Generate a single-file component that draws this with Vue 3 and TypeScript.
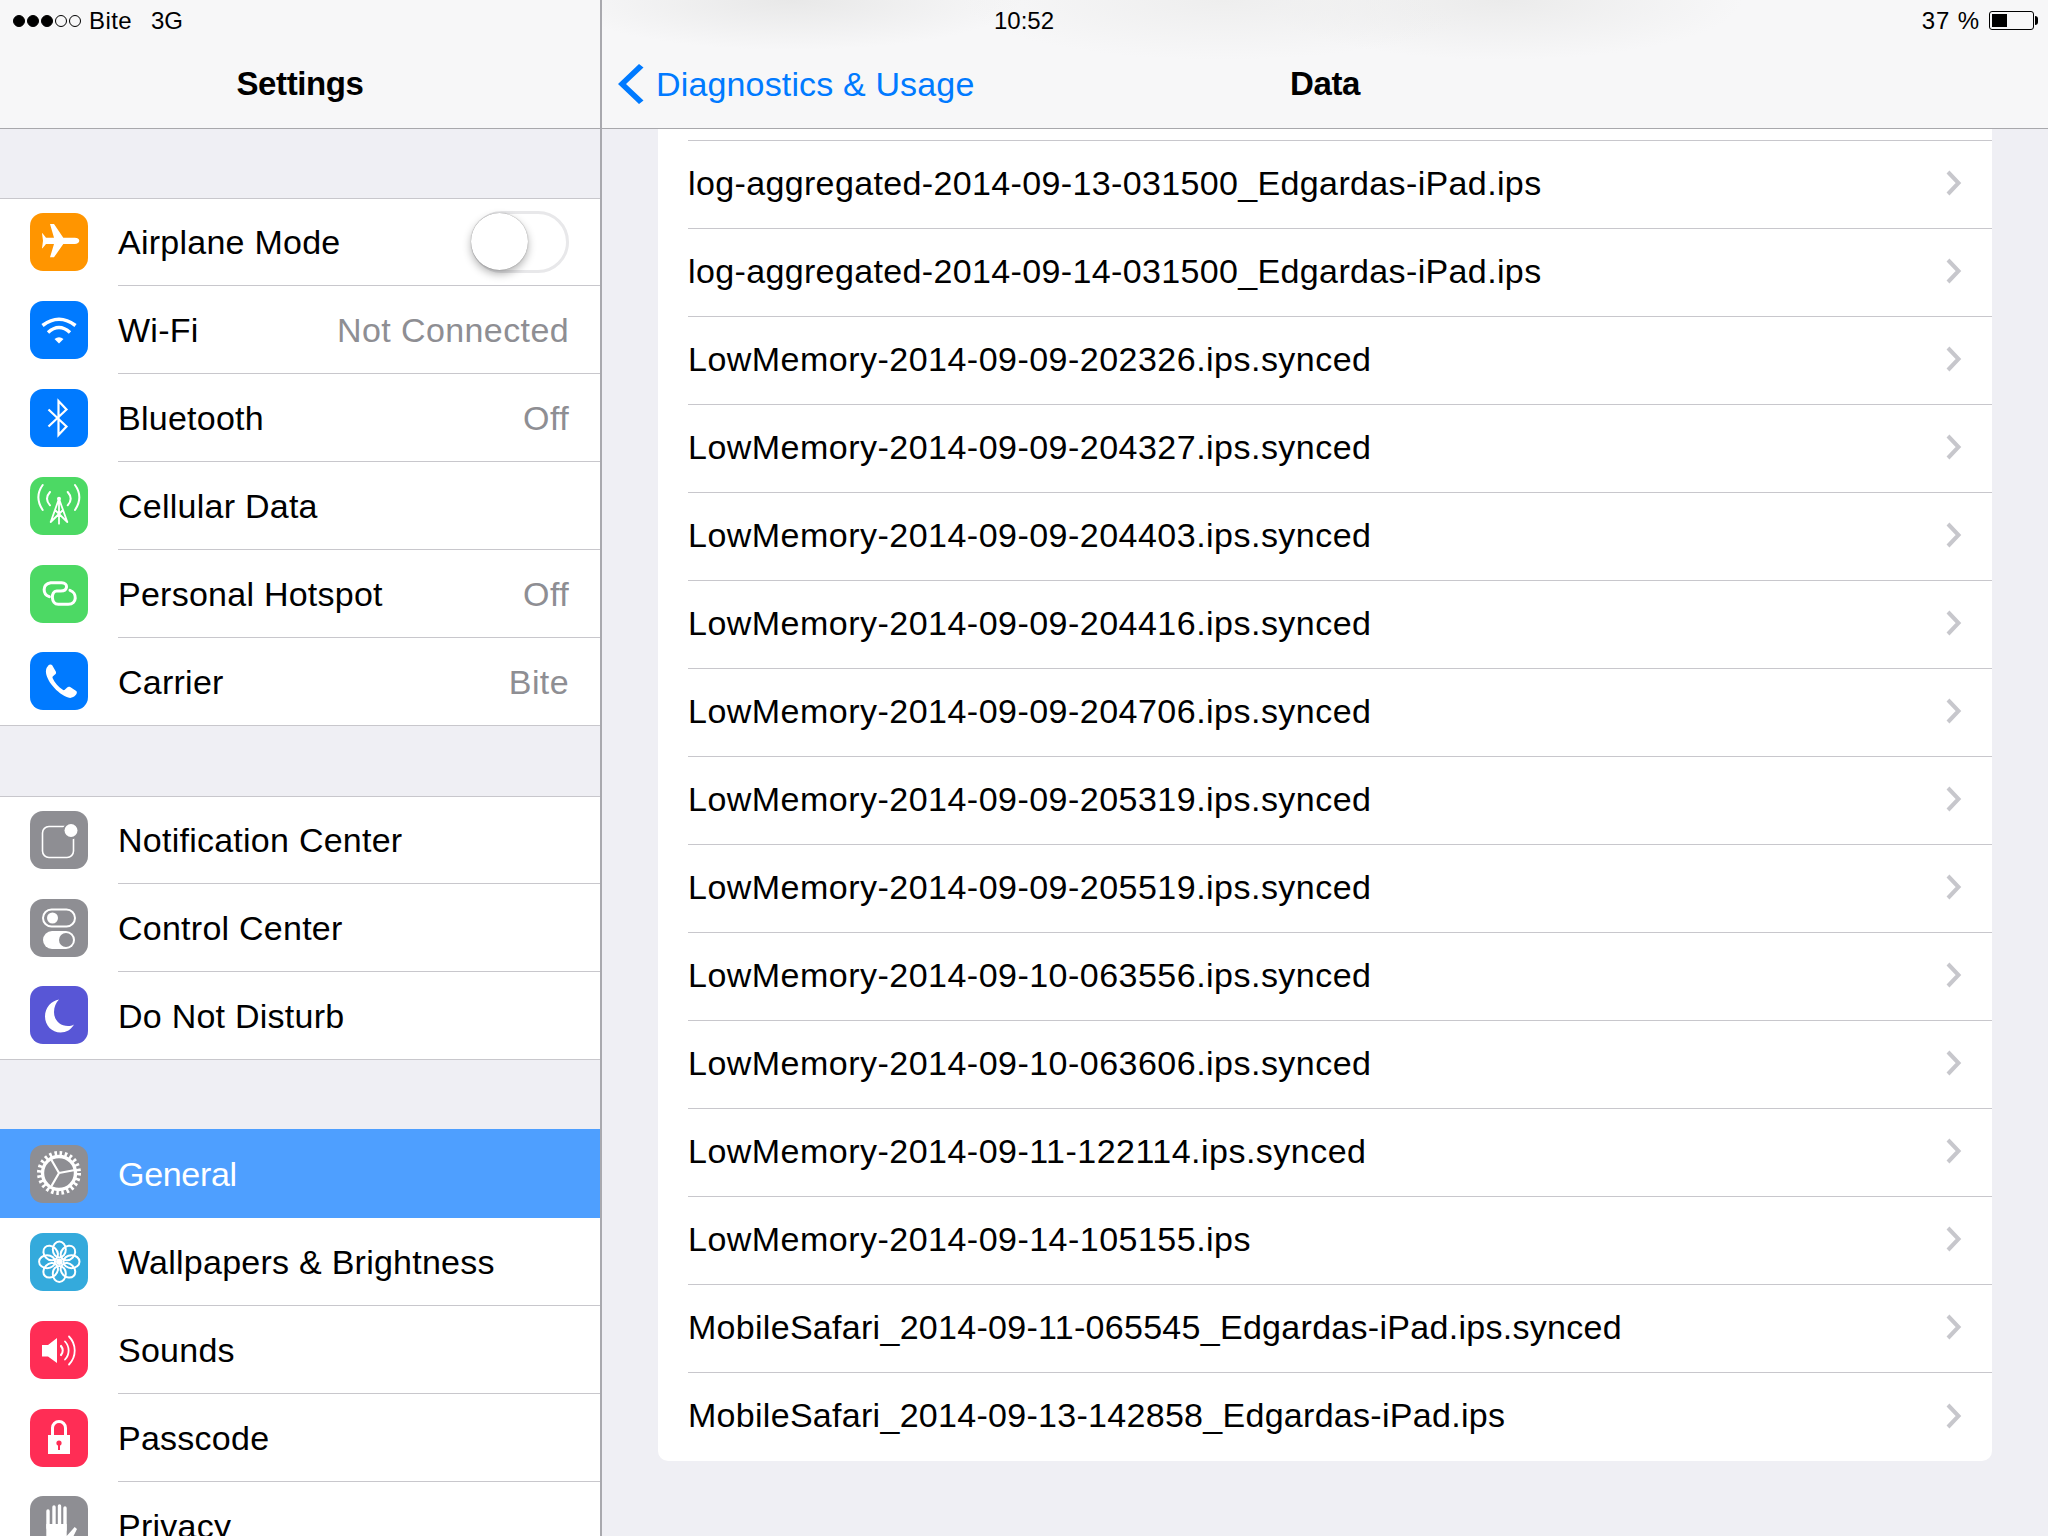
<script setup lang="ts">
interface SettingRow {
  label: string
  icon: string
  color: string
  value?: string
  toggle?: boolean
  selected?: boolean
}

const groups: SettingRow[][] = [
  [
    { label: 'Airplane Mode', icon: 'plane', color: '#ff9500', toggle: true },
    { label: 'Wi-Fi', icon: 'wifi', color: '#007aff', value: 'Not Connected' },
    { label: 'Bluetooth', icon: 'bt', color: '#007aff', value: 'Off' },
    { label: 'Cellular Data', icon: 'cell', color: '#4cd964' },
    { label: 'Personal Hotspot', icon: 'hotspot', color: '#4cd964', value: 'Off' },
    { label: 'Carrier', icon: 'phone', color: '#007aff', value: 'Bite' },
  ],
  [
    { label: 'Notification Center', icon: 'notif', color: '#8e8e93' },
    { label: 'Control Center', icon: 'control', color: '#8e8e93' },
    { label: 'Do Not Disturb', icon: 'moon', color: '#5856d6' },
  ],
  [
    { label: 'General', icon: 'gear', color: '#8e8e93', selected: true },
    { label: 'Wallpapers & Brightness', icon: 'flower', color: '#34aadc' },
    { label: 'Sounds', icon: 'sound', color: '#ff2d55' },
    { label: 'Passcode', icon: 'lock', color: '#ff2d55' },
    { label: 'Privacy', icon: 'hand', color: '#8e8e93' },
  ],
]

const files: string[] = [
  'log-aggregated-2014-09-13-031500_Edgardas-iPad.ips',
  'log-aggregated-2014-09-14-031500_Edgardas-iPad.ips',
  'LowMemory-2014-09-09-202326.ips.synced',
  'LowMemory-2014-09-09-204327.ips.synced',
  'LowMemory-2014-09-09-204403.ips.synced',
  'LowMemory-2014-09-09-204416.ips.synced',
  'LowMemory-2014-09-09-204706.ips.synced',
  'LowMemory-2014-09-09-205319.ips.synced',
  'LowMemory-2014-09-09-205519.ips.synced',
  'LowMemory-2014-09-10-063556.ips.synced',
  'LowMemory-2014-09-10-063606.ips.synced',
  'LowMemory-2014-09-11-122114.ips.synced',
  'LowMemory-2014-09-14-105155.ips',
  'MobileSafari_2014-09-11-065545_Edgardas-iPad.ips.synced',
  'MobileSafari_2014-09-13-142858_Edgardas-iPad.ips',
]

function fileKind(name: string): string {
  if (name.startsWith('log')) return 'kind-log'
  if (name.startsWith('Mobile')) return 'kind-safari'
  return 'kind-memory'
}

const petals = [0, 45, 90, 135, 180, 225, 270, 315]
</script>

<template>
  <div class="screen">
    <aside class="master">
      <header class="bar">
        <div class="status">
          <span class="dots"><i class="on"></i><i class="on"></i><i class="on"></i><i></i><i></i></span>
          <span class="carrier">Bite</span>
          <span class="net">3G</span>
        </div>
        <div class="nav nav-center"><h1>Settings</h1></div>
      </header>
      <div v-for="(group, g) in groups" :key="g" class="group">
        <div v-for="row in group" :key="row.label" class="row" :class="{ selected: row.selected }">
          <span class="icon" :style="{ background: row.color }">
            <svg viewBox="0 0 58 58" width="58" height="58">
              <path v-if="row.icon === 'plane'" fill="#fff" d="M49.300 27.700c0 1.800-2 3.300-4.500 3.300H33.300L24 44.300h-4L24 31h-8l-3.500 4.300H12l1-7.600-1-7.400h.5L16 24.700h8L20 11h4l9.300 13.700h11.500c2.500 0 4.500 1.200 4.500 3z" />
              <g v-else-if="row.icon === 'wifi'" fill="none" stroke="#fff">
                <path stroke-width="3.600" d="M12.500 24.500Q29 12 45.500 24.500" />
                <path stroke-width="3.400" d="M18 31.500Q29 21.500 40 31.500" />
                <path fill="#fff" stroke="none" d="M24.500 38Q29 34.500 33.500 38L29 42.500z" />
              </g>
              <path v-else-if="row.icon === 'bt'" fill="none" stroke="#fff" stroke-width="2.200" d="M18.500 20.500l18 17-8 8.500V12l8 8.500-18 17" />
              <g v-else-if="row.icon === 'cell'" fill="none" stroke="#fff" stroke-width="1.800" stroke-linecap="round">
                <path d="M29 21.700V46.700M29 21.700L20.700 45M29 21.700L37.300 45M20.700 45L33 33M37.300 45L25 33" />
                <path stroke-width="2" d="M20 15Q14 21.700 20 28.300M37.700 15Q43.700 21.700 37.700 28.300M12.700 8Q4 20 12.700 33M45 8Q53.700 20 45 33" />
                <circle cx="29" cy="21.700" r="2" fill="#fff" stroke="none" />
              </g>
              <path v-else-if="row.icon === 'hotspot'" fill="none" stroke="#fff" stroke-width="3" stroke-linecap="round" d="M19.300 31.700C12.700 29.300 11.700 19.300 20.700 17.700H31.700C38.300 17.700 38.300 26 30.700 26H26.700C20.700 26 20.700 39.300 28.300 39.300H38.300C47.300 39.300 47.300 27.700 40 25.300" />
              <path v-else-if="row.icon === 'phone'" fill="#fff" d="M18 13.500c1.500-1.300 3.300-1.500 4.200-.3l3.600 6.300c.6 1.200.2 2.300-.8 3.100l-2 1.700c-.7.6-.6 1.400-.2 2.200 2 4.300 5.700 8.600 10 11.300.8.500 1.500.5 2.200-.2l1.900-1.900c1-1 2.200-1.300 3.300-.6l6 4c1.100.8.8 2.600-.5 4-2 2.200-4.500 3.400-7.500 2.500-5.500-1.700-11-6-15.500-11.500-4-5-6.700-10.400-6.800-14.700 0-2.500.9-4.400 2.600-5.900z" />
              <g v-else-if="row.icon === 'notif'">
                <rect x="12.500" y="15.500" width="31" height="31" rx="6.500" fill="none" stroke="#fff" stroke-width="1.600" />
                <circle cx="41" cy="20" r="8.500" fill="#8e8e93" />
                <circle cx="41" cy="19.500" r="6.500" fill="#fff" />
              </g>
              <g v-else-if="row.icon === 'control'">
                <rect x="13" y="10.500" width="32" height="17" rx="8.500" fill="none" stroke="#fff" stroke-width="2" />
                <circle cx="22.500" cy="19" r="5.500" fill="#fff" />
                <rect x="13" y="32" width="32" height="18" rx="9" fill="#fff" />
                <circle cx="36" cy="41" r="7" fill="#8e8e93" />
              </g>
              <path v-else-if="row.icon === 'moon'" fill="#fff" d="M29 13.500C21.500 14.800 15 21.500 15 30.500c0 9 7 16 15.500 16 5.800 0 10.800-3 13.500-8-1.600 1-4 1.500-6 1.500-8.200 0-14-6-14-14 0-5 2-9.600 5-12.500z" />
              <g v-else-if="row.icon === 'gear'" fill="none" stroke="#fff">
                <circle cx="29" cy="28" r="19.500" stroke-width="5" stroke-dasharray="2.500 2.605" />
                <circle cx="29" cy="28" r="16.500" stroke-width="3.400" />
                <path stroke-width="2.200" d="M29 28L21.500 15M29 28L45 25M29 28L21.500 41" />
              </g>
              <g v-else-if="row.icon === 'flower'" fill="none" stroke="#fff" stroke-width="2">
                <ellipse v-for="a in petals" :key="a" cx="29.300" cy="16.500" rx="6.500" ry="8" :transform="`rotate(${a} 29.300 28.700)`" />
                <circle cx="29.300" cy="28.700" r="3.300" fill="#fff" stroke="none" />
              </g>
              <g v-else-if="row.icon === 'sound'" fill="none" stroke="#fff" stroke-width="1.800" stroke-linecap="round">
                <path fill="#fff" stroke="none" d="M12 24h6l9-7v25l-9-6.500h-6z" />
                <path stroke-width="2.200" d="M31 25a7 7 0 0 1 0 9" />
                <path d="M35 20.500a13 13 0 0 1 0 18M39 15.500a20 20 0 0 1 0 28" />
              </g>
              <g v-else-if="row.icon === 'lock'">
                <rect x="18" y="26" width="22" height="19" fill="#fff" />
                <path d="M22.500 26v-7a6.500 6.500 0 0 1 13 0v7" fill="none" stroke="#fff" stroke-width="3" />
                <circle cx="29" cy="34" r="2.600" fill="#ff2d55" />
                <rect x="28" y="34" width="2" height="7" fill="#ff2d55" />
              </g>
              <g v-else-if="row.icon === 'hand'">
                <path fill="none" stroke="#fff" stroke-width="3.400" stroke-linecap="round" d="M18 15v17M24 11v21M29.500 10v22M35 12v22" />
                <path fill="#fff" d="M16.300 28h20.400v12l8-9 2.300 2-7 14v11H16.300z" />
              </g>
            </svg>
          </span>
          <span class="label">
            <span class="text">{{ row.label }}</span>
            <span v-if="row.value" class="value">{{ row.value }}</span>
            <span v-if="row.toggle" class="toggle"><span class="knob"></span></span>
          </span>
        </div>
      </div>
    </aside>

    <main class="detail">
      <header class="bar bar-detail">
        <div class="status">
          <span class="time">10:52</span>
          <span class="percent">37 %</span>
          <span class="battery"><span class="charge"></span></span>
        </div>
        <div class="nav nav-center">
          <span class="back">
            <svg viewBox="0 0 26 40" width="26" height="40">
              <path fill="#007aff" d="M21 0l4.500 3.500L8 20l17.500 16.500L21 40 0 20z" />
            </svg>
            <span>Diagnostics &amp; Usage</span>
          </span>
          <h1>Data</h1>
        </div>
      </header>
      <div class="card">
        <div class="lead"></div>
        <div v-for="f in files" :key="f" class="file">
          <span class="fname" :class="fileKind(f)">{{ f }}</span>
          <svg viewBox="0 0 18 28" width="18" height="28">
            <path d="M3 3l10.500 11L3 25" fill="none" stroke="#c7c7cc" stroke-width="4" />
          </svg>
        </div>
      </div>
    </main>
  </div>
</template>

<style>
html, body { margin: 0; background: #efeff4; }
</style>

<style scoped>
.screen {
  width: 2048px;
  height: 1536px;
  display: flex;
  overflow: hidden;
  background: #efeff4;
  font-family: "Liberation Sans", Arial, sans-serif;
  color: #000;
}
.master {
  width: 600px;
  flex: none;
  overflow: hidden;
  background: #efeff4;
  border-right: 2px solid #a9a9ae;
}
.detail {
  flex: 1;
  min-width: 0;
}
.bar {
  height: 129px;
  box-sizing: border-box;
  background: #f7f7f8;
  border-bottom: 1px solid #a8a8ac;
  margin-bottom: 69px;
}
.bar-detail {
  margin-bottom: 0;
  background:
    radial-gradient(ellipse 230px 50px at 190px 0, #e8e8e8, transparent),
    radial-gradient(ellipse 260px 60px at 620px 0, #eeeeee, transparent),
    radial-gradient(ellipse 240px 60px at 900px 0, #ebebeb, transparent),
    #f7f7f8;
}
.status {
  height: 40px;
  box-sizing: border-box;
  padding-top: 1px;
  display: flex;
  align-items: center;
  font-size: 24px;
  padding-left: 13px;
  position: relative;
}
.dots { display: flex; gap: 2px; width: 76px; }
.dots i {
  width: 12px;
  height: 12px;
  box-sizing: border-box;
  border-radius: 50%;
  border: 1px solid #000;
}
.dots i.on { background: #000; }
.carrier { letter-spacing: 0.4px; }
.net { margin-left: 19px; }
.nav {
  height: 88px;
  position: relative;
  display: flex;
  align-items: center;
  justify-content: center;
}
.nav h1 {
  margin: 0;
  font-size: 33px;
  font-weight: 700;
  letter-spacing: -0.4px;
}
.back {
  position: absolute;
  left: 16px;
  top: 24px;
  display: flex;
  align-items: center;
  gap: 12px;
  color: #007aff;
  font-size: 34px;
  letter-spacing: 0.15px;
}
.time { margin-left: 379px; }
.percent { margin-left: auto; letter-spacing: 0.9px; }
.battery {
  width: 45px;
  height: 19px;
  margin: 0 14px 0 9px;
  box-sizing: border-box;
  border: 1px solid #000;
  border-radius: 3px;
  padding: 2px;
  position: relative;
}
.battery::after {
  content: "";
  position: absolute;
  right: -5px;
  top: 4px;
  width: 3px;
  height: 9px;
  background: #000;
  border-radius: 0 3px 3px 0;
}
.charge { display: block; width: 15px; height: 100%; background: #000; }
.group {
  background: #fff;
  margin-bottom: 70px;
  box-shadow: inset 0 1px 0 #c8c7cc;
  border-bottom: 1px solid #c8c7cc;
}
.row {
  height: 88px;
  display: flex;
  align-items: stretch;
  padding-left: 30px;
  font-size: 34px;
}
.row:last-child { height: 87px; }
.row:last-child .label { border-bottom: 0; }
.icon {
  width: 58px;
  height: 58px;
  flex: none;
  align-self: center;
  margin-top: -1px;
  border-radius: 13px;
  overflow: hidden;
  display: block;
}
.icon svg { display: block; }
.label {
  flex: 1;
  margin-left: 30px;
  padding: 2px 31px 0 0;
  display: flex;
  align-items: center;
  justify-content: space-between;
  border-bottom: 1px solid #c8c7cc;
}
.text { letter-spacing: 0.25px; }
.value { color: #8e8e93; letter-spacing: 0.4px; }
.selected {
  background: #4e9fff;
  color: #fff;
  box-shadow: 0 -1px 0 #4e9fff;
}
.selected .label { border-bottom-color: #4e9fff; }
.selected .text { letter-spacing: -0.3px; }
.toggle {
  width: 98px;
  height: 62px;
  margin-top: -2px;
  box-sizing: border-box;
  border: 3px solid #e8e8ea;
  border-radius: 31px;
  background: #fff;
  position: relative;
  flex: none;
}
.knob {
  position: absolute;
  left: -3px;
  top: -1px;
  width: 57px;
  height: 57px;
  border-radius: 50%;
  background: #fff;
  box-shadow: 0 4px 8px rgba(0, 0, 0, 0.3), 0 0 1px rgba(0, 0, 0, 0.5);
}
.card {
  margin: 0 56px;
  background: #fff;
  border-radius: 0 0 10px 10px;
  padding-left: 30px;
  font-size: 34px;
}
.lead {
  height: 11px;
  border-bottom: 1px solid #c8c7cc;
}
.file {
  height: 88px;
  box-sizing: border-box;
  display: flex;
  align-items: center;
  justify-content: space-between;
  padding: 0 29px 3px 0;
  border-bottom: 1px solid #c8c7cc;
}
.file:last-child { border-bottom: 0; }
.kind-log { letter-spacing: 0.36px; }
.kind-memory { letter-spacing: 0.48px; }
.kind-safari { letter-spacing: 0.29px; }
</style>
